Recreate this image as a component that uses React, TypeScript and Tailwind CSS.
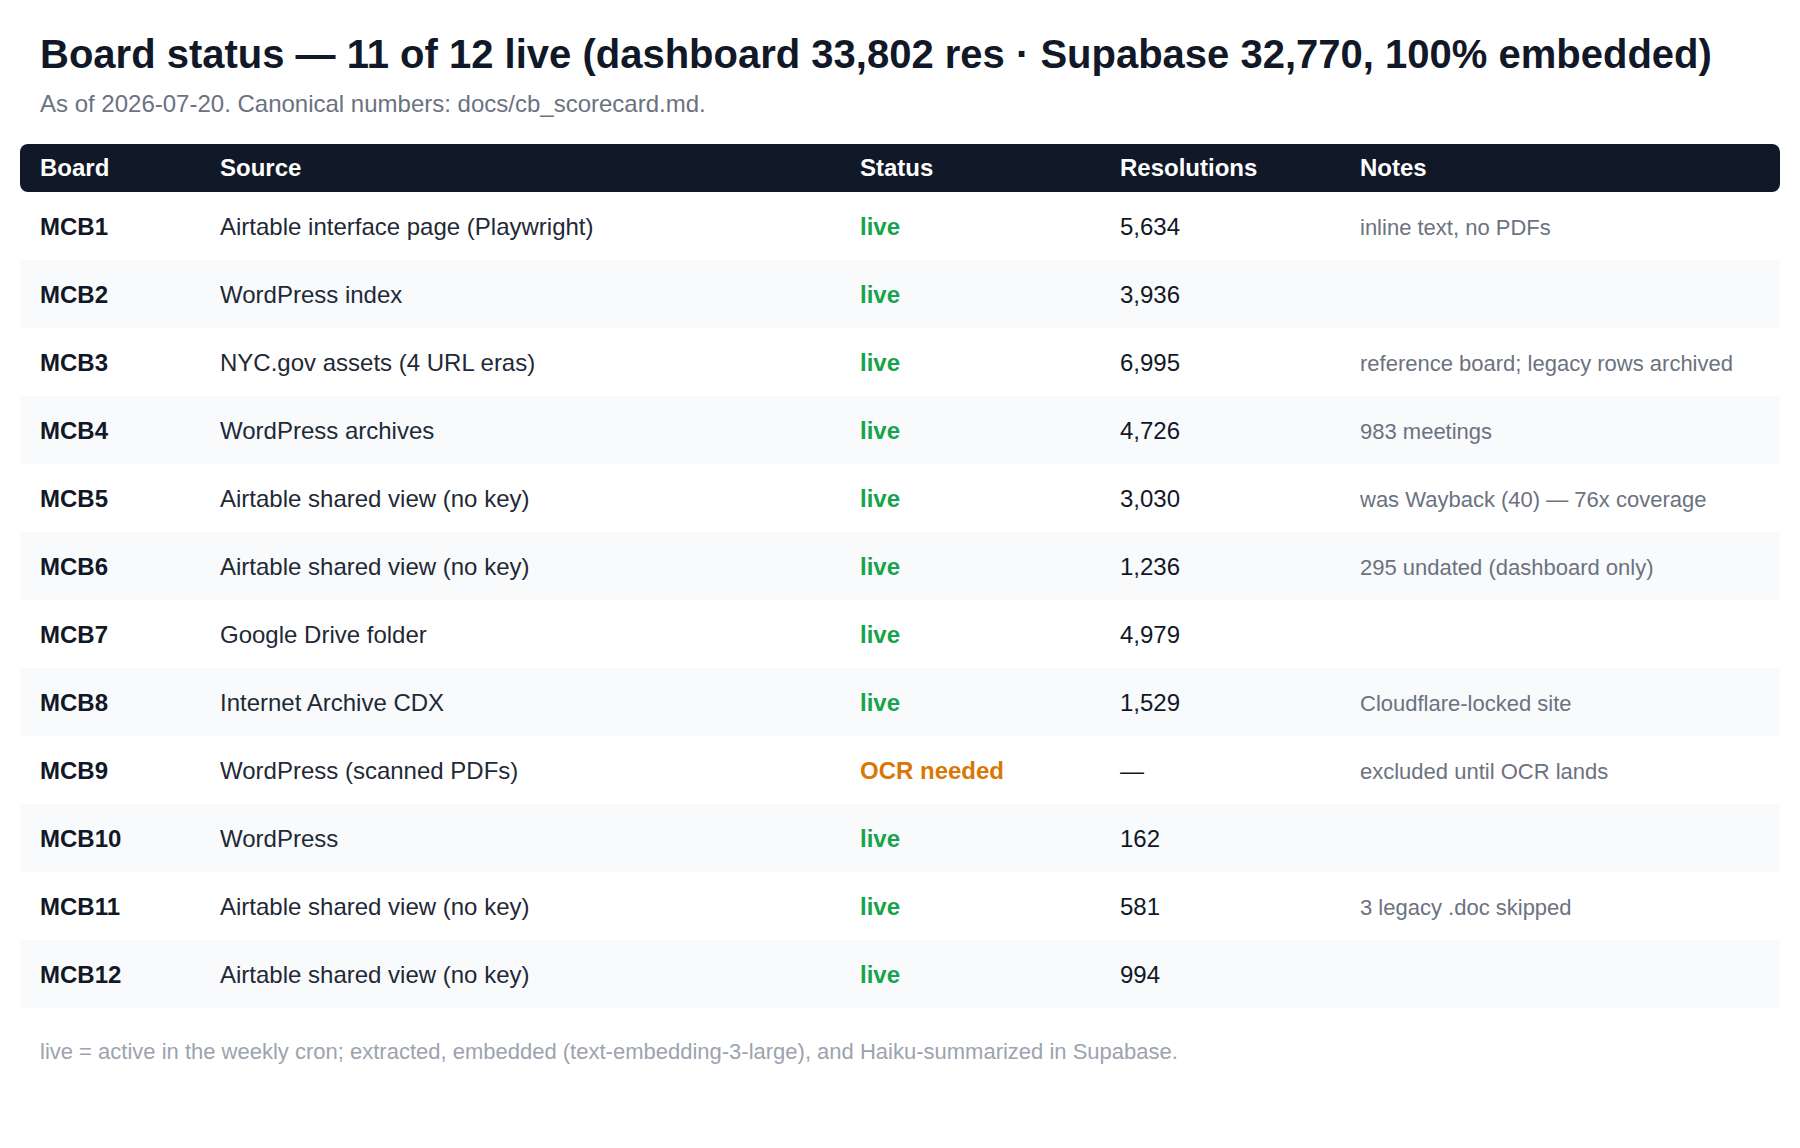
type Row = {
  board: string
  source: string
  status: 'live' | 'ocr'
  resolutions: string
  notes?: string
}

const rows: Row[] = [
  { board: 'MCB1', source: 'Airtable interface page (Playwright)', status: 'live', resolutions: '5,634', notes: 'inline text, no PDFs' },
  { board: 'MCB2', source: 'WordPress index', status: 'live', resolutions: '3,936' },
  { board: 'MCB3', source: 'NYC.gov assets (4 URL eras)', status: 'live', resolutions: '6,995', notes: 'reference board; legacy rows archived' },
  { board: 'MCB4', source: 'WordPress archives', status: 'live', resolutions: '4,726', notes: '983 meetings' },
  { board: 'MCB5', source: 'Airtable shared view (no key)', status: 'live', resolutions: '3,030', notes: 'was Wayback (40) — 76x coverage' },
  { board: 'MCB6', source: 'Airtable shared view (no key)', status: 'live', resolutions: '1,236', notes: '295 undated (dashboard only)' },
  { board: 'MCB7', source: 'Google Drive folder', status: 'live', resolutions: '4,979' },
  { board: 'MCB8', source: 'Internet Archive CDX', status: 'live', resolutions: '1,529', notes: 'Cloudflare-locked site' },
  { board: 'MCB9', source: 'WordPress (scanned PDFs)', status: 'ocr', resolutions: '—', notes: 'excluded until OCR lands' },
  { board: 'MCB10', source: 'WordPress', status: 'live', resolutions: '162' },
  { board: 'MCB11', source: 'Airtable shared view (no key)', status: 'live', resolutions: '581', notes: '3 legacy .doc skipped' },
  { board: 'MCB12', source: 'Airtable shared view (no key)', status: 'live', resolutions: '994' },
]

const cols = 'grid grid-cols-[180px_640px_260px_240px_1fr]'

export default function App() {
  return (
    <div className="min-h-screen bg-white px-[20px] pt-[30px] font-['Liberation_Sans',Arial,sans-serif]">
      {/* Heading */}
      <div className="px-[20px]">
        <h1 className="text-[40px] leading-[48px] font-bold text-[#111827]">
          Board status — 11 of 12 live (dashboard 33,802 res · Supabase 32,770, 100% embedded)
        </h1>
        <p className="mt-[10px] text-[24px] leading-[32px] text-[#6b7280]">
          As of 2026-07-20. Canonical numbers: docs/cb_scorecard.md.
        </p>
      </div>

      {/* Table */}
      <div className="mt-[24px]">
        <div className={`${cols} h-[48px] items-center rounded-[8px] bg-[#111827] text-[24px] font-bold text-white`}>
          <div className="pl-[20px]">Board</div>
          <div className="pl-[20px]">Source</div>
          <div className="pl-[20px]">Status</div>
          <div className="pl-[20px]">Resolutions</div>
          <div className="pl-[20px]">Notes</div>
        </div>

        {rows.map((row, i) => (
          <div
            key={row.board}
            className={`${cols} h-[68px] items-center pt-[2px] text-[24px] ${i % 2 === 1 ? 'bg-[#f9fafb]' : 'bg-white'}`}
          >
            <div className="pl-[20px] font-bold text-[#111827]">{row.board}</div>
            <div className="pl-[20px] text-[#1f2937]">{row.source}</div>
            <div className="pl-[20px]">
              {row.status === 'live' ? (
                <span className="font-bold text-[#16a34a]">live</span>
              ) : (
                <span className="font-bold text-[#d97706]">OCR needed</span>
              )}
            </div>
            <div className="pl-[20px] text-[#111827]">{row.resolutions}</div>
            <div className="pl-[20px] text-[22px] text-[#6b7280]">{row.notes}</div>
          </div>
        ))}
      </div>

      {/* Footnote */}
      <p className="mt-[28px] px-[20px] text-[22px] leading-[32px] text-[#9ca3af]">
        live = active in the weekly cron; extracted, embedded (text-embedding-3-large), and Haiku-summarized in Supabase.
      </p>
    </div>
  )
}
